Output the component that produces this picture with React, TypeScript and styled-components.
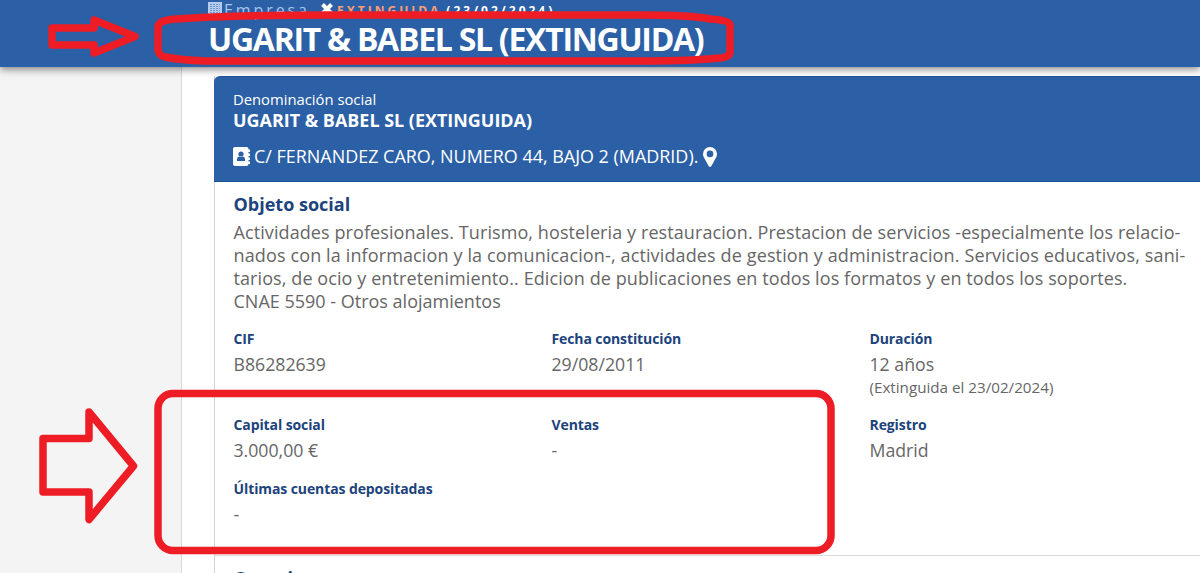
import React from "react";
import styled, { createGlobalStyle } from "styled-components";

const GlobalStyle = createGlobalStyle`
  * {
    box-sizing: border-box;
  }
  body {
    margin: 0;
    overflow: hidden;
    font-family: "Open Sans", sans-serif;
    background: #f4f4f4;
  }
`;

const Page = styled.div`
  position: relative;
  display: flex;
  flex-direction: column;
  width: 1200px;
  height: 573px;
  overflow: hidden;
`;

const Header = styled.header`
  z-index: 1;
  flex: none;
  height: 67px;
  padding-left: 208px;
  background: #2c60a6;
  color: #fff;
  box-shadow: 0 2px 8px rgba(0, 0, 0, 0.5);
`;

const Breadcrumb = styled.div`
  display: flex;
  align-items: center;
  height: 18px;
  white-space: pre;
`;

const Kind = styled.span`
  margin: 1px 11px 0 2px;
  font-size: 16px;
  line-height: 18px;
  letter-spacing: 2.9px;
  color: #a9c4ea;
`;

const Status = styled.span<{ $color: string }>`
  margin: 3px 5px 0 0;
  font-size: 12px;
  line-height: 16px;
  font-weight: 700;
  letter-spacing: 3px;
  color: ${(props) => props.$color};
`;

const CompanyTitle = styled.h1`
  margin: -1px 0 0;
  font-size: 32px;
  line-height: 44px;
  font-weight: 700;
  letter-spacing: -1.27px;
  white-space: nowrap;
`;

const Body = styled.div`
  display: flex;
  flex: 1;
  min-height: 0;
`;

const Gutter = styled.aside`
  flex: none;
  width: 182px;
  border-right: 1px solid #d9d9d9;
`;

const Content = styled.main`
  flex: 1;
  padding: 9px 0 0 32px;
  background: #fff;
`;

const Card = styled.section`
  width: 1018px;
  border-left: 1px solid #d5d5d5;
`;

const CardHeader = styled.div`
  height: 106px;
  margin-left: -1px;
  padding: 12px 19px 0;
  border-radius: 6px 0 0 0;
  border-top: 1px solid #1f519b;
  border-bottom: 1px solid #1f519b;
  background: #2c60a6;
  color: #fff;
`;

const Caption = styled.div`
  font-size: 14.8px;
  line-height: 20px;
`;

const CompanyName = styled.div`
  font-size: 17.95px;
  line-height: 22px;
  font-weight: 700;
`;

const Address = styled.div`
  display: flex;
  align-items: center;
  height: 24px;
  margin-top: 13px;
  font-size: 17.95px;
  white-space: nowrap;
`;

const AddressText = styled.span`
  margin: 0 4px;
`;

const CardBody = styled.div`
  height: 374px;
  padding: 9px 0 0 18.5px;
  border-bottom: 1px solid #d9d9d9;
`;

const SectionTitle = styled.h2`
  margin: 0;
  font-size: 18px;
  line-height: 26px;
  font-weight: 700;
  color: #1c437c;
`;

const Purpose = styled.p`
  margin: 4px 0 14px;
  font-size: 18px;
  line-height: 23px;
  color: #666;
  white-space: nowrap;
`;

const PurposeLine = styled.span<{ $tracking: number }>`
  display: block;
  letter-spacing: ${(props) => props.$tracking}px;
`;

const Facts = styled.dl`
  display: grid;
  grid-template-columns: 318px 318px 300px;
  grid-template-rows: 86px 64px 60px;
  margin: 0;
`;

const Label = styled.dt`
  font-size: 14px;
  line-height: 23px;
  font-weight: 700;
  letter-spacing: -0.1px;
  color: #1c437c;
`;

const Value = styled.dd`
  margin: 1px 0 0;
  font-size: 17.7px;
  line-height: 27px;
  color: #666;
`;

const Note = styled.dd`
  margin: -1px 0 0;
  font-size: 15.2px;
  line-height: 20px;
  color: #666;
`;

const NextSection = styled.div`
  padding: 9px 0 0 18.5px;
`;

const Annotations = styled.svg`
  position: absolute;
  inset: 0;
  z-index: 2;
  fill: none;
  stroke: #ee1c25;
  stroke-width: 7.5;
  stroke-linejoin: round;
`;

const BuildingIcon: React.FC = () => (
  <svg width="14" height="16" viewBox="0 0 14 16">
    <path fill="#b4cbee" d="M0 1H14V16H0Z" />
    <path stroke="#6f97cf" strokeWidth="1" strokeDasharray="2 1" d="M2 3.500H12M2 5.500H12M2 7.500H12M2 9.500H12M2 11.500H12" />
  </svg>
);

const CrossIcon: React.FC = () => (
  <svg width="12" height="12" viewBox="0 0 12 12">
    <path stroke="#fff" strokeWidth="4" d="M1.500 1.500L10.500 10.500M10.500 1.500L1.500 10.500" />
  </svg>
);

const AddressBookIcon: React.FC = () => (
  <svg width="17" height="19" viewBox="0 0 17 19">
    <rect width="15.500" height="19" rx="2" fill="#fff" />
    <path fill="#fff" d="M15 2.500H17V5H15ZM15 6.500H17V9H15ZM15 10.500H17V13H15ZM15 14.500H17V17H15Z" />
    <circle cx="8" cy="7" r="2.600" fill="#2c60a6" />
    <path fill="#2c60a6" d="M4 14V12Q4 9.500 6.300 9.500Q8 10.600 9.700 9.500Q12 9.500 12 12V14Z" />
  </svg>
);

const MarkerIcon: React.FC = () => (
  <svg width="15" height="22" viewBox="-1 -2 15 22">
    <path
      fill="#fff"
      fillRule="evenodd"
      d="M7 0A7 7 0 0 0 0 7Q0 8.700 .7 10L5.700 19.200Q7 20.500 8.300 19.200L13.300 10Q14 8.700 14 7A7 7 0 0 0 7 0ZM7 3.600A3.300 3.300 0 1 1 7 10.200A3.300 3.300 0 1 1 7 3.600Z"
    />
  </svg>
);

const purpose = [
  { text: "Actividades profesionales. Turismo, hosteleria y restauracion. Prestacion de servicios -especialmente los relacio-", tracking: 0.09 },
  { text: "nados con la informacion y la comunicacion-, actividades de gestion y administracion. Servicios educativos, sani-", tracking: 0.13 },
  { text: "tarios, de ocio y entretenimiento.. Edicion de publicaciones en todos los formatos y en todos los soportes.", tracking: 0.09 },
  { text: "CNAE 5590 - Otros alojamientos", tracking: 0 },
];

const facts = [
  { label: "CIF", value: "B86282639" },
  { label: "Fecha constitución", value: "29/08/2011" },
  { label: "Duración", value: "12 años", note: "(Extinguida el 23/02/2024)" },
  { label: "Capital social", value: "3.000,00 €" },
  { label: "Ventas", value: "-" },
  { label: "Registro", value: "Madrid" },
  { label: "Últimas cuentas depositadas", value: "-" },
];

type FactProps = {
  label: string;
  value: string;
  note?: string;
};

const Fact: React.FC<FactProps> = ({ label, value, note }) => (
  <div>
    <Label>{label}</Label>
    <Value>{value}</Value>
    {note && <Note>{note}</Note>}
  </div>
);

const App: React.FC = () => {
  return (
    <Page>
      <GlobalStyle />
      <Header>
        <Breadcrumb>
          <BuildingIcon />
          <Kind>Empresa</Kind>
          <CrossIcon />
          <Status $color="#ff9d76">&#8202;EXTINGUIDA</Status>
          <Status $color="#fff">(23/02/2024)</Status>
        </Breadcrumb>
        <CompanyTitle>UGARIT &amp; BABEL SL (EXTINGUIDA)</CompanyTitle>
      </Header>
      <Body>
        <Gutter />
        <Content>
          <Card>
            <CardHeader>
              <Caption>Denominación social</Caption>
              <CompanyName>UGARIT &amp; BABEL SL (EXTINGUIDA)</CompanyName>
              <Address>
                <AddressBookIcon />
                <AddressText>C/ FERNANDEZ CARO, NUMERO 44, BAJO 2 (MADRID).</AddressText>
                <MarkerIcon />
              </Address>
            </CardHeader>
            <CardBody>
              <SectionTitle>Objeto social</SectionTitle>
              <Purpose>
                {purpose.map((line) => (
                  <PurposeLine key={line.text} $tracking={line.tracking}>
                    {line.text}
                  </PurposeLine>
                ))}
              </Purpose>
              <Facts>
                {facts.map((fact) => (
                  <Fact key={fact.label} {...fact} />
                ))}
              </Facts>
            </CardBody>
            <NextSection>
              <SectionTitle>Consejo</SectionTitle>
            </NextSection>
          </Card>
        </Content>
      </Body>
      <Annotations width="1200" height="573" viewBox="0 0 1200 573">
        <path d="M52 28H94V20L135 36.500L94 53V45H52Z" />
        <path d="M176 19Q230 15 330 15H640Q690 15 710 19Q730 20 730 25V52Q730 57 720 58Q690 61 650 61H205Q180 60 165 57Q158 55 158 49V27Q158 20 176 19Z" />
        <path d="M43 438.500H89V412L133.500 466L89 519.500V492H43Z" />
        <rect x="158" y="393.500" width="673" height="157" rx="15" />
      </Annotations>
    </Page>
  );
};

export default App;
